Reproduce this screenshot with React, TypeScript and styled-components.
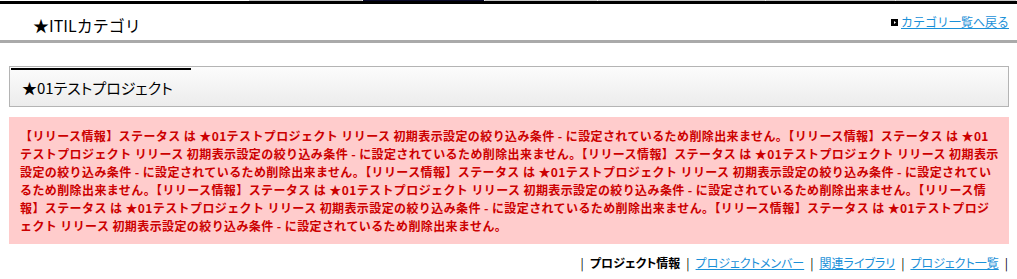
import React from "react";
import styled, { createGlobalStyle } from "styled-components";

const GlobalStyle = createGlobalStyle`
  body {
    margin: 0;
    background: #ffffff;
    font-family: "Noto Sans CJK JP", "Liberation Sans", sans-serif;
    color: #000000;
  }
`;

const colors = {
  red: "#cc0000",
  pink: "#ffcccc",
  link: "#1a90d8",
  rule: "#aaaaaa",
};

const TabEdges = styled.div`
  display: flex;
  height: 1px;
  padding-left: 249px;
`;

const TabEdge = styled.div<{ width: number; active?: boolean }>`
  width: ${(p) => p.width}px;
  height: 1px;
  background: ${(p) => (p.active ? "#0a0a2a" : "#c8c8c8")};
  border-right: 1px solid #f0f0f0;
  box-sizing: border-box;
`;

const TopBar = styled.div`
  height: 3px;
  background: #000000;
`;

const Header = styled.header`
  display: flex;
  align-items: center;
  justify-content: space-between;
  height: 36px;
  padding: 0 8px 0 33px;
  border-bottom: 3px solid ${colors.rule};
`;

const SiteTitle = styled.h1`
  margin: 6px 0 0;
  font-size: 16px;
  font-weight: normal;
  line-height: 20px;
`;

const BackLink = styled.a`
  display: flex;
  align-items: center;
  gap: 3px;
  font-size: 12px;
  line-height: 16px;
  color: ${colors.link};
  text-decoration: underline;
  cursor: pointer;
`;

const Content = styled.main`
  padding: 23px 8px 0 9px;
`;

const ProjectPanel = styled.section`
  position: relative;
  height: 37px;
  border: 1px solid #b4b4b4;
  background: linear-gradient(#fcfcfc, #ececec);
  display: flex;
  align-items: center;
  padding: 2px 0 0 12px;
  box-sizing: content-box;

  &::before {
    content: "";
    position: absolute;
    left: 1px;
    top: 1px;
    width: 180px;
    height: 2px;
    background: #000000;
  }
`;

const ProjectTitle = styled.h2`
  margin: 0;
  font-size: 15px;
  font-weight: normal;
  line-height: 20px;
  font-feature-settings: "palt";
`;

const ErrorBox = styled.div`
  margin-top: 10px;
  padding: 10px 10px 9px 11px;
  background: ${colors.pink};
  color: ${colors.red};
  font-size: 12px;
  font-weight: bold;
  line-height: 18px;
  letter-spacing: 0.4px;
`;

const SubNav = styled.nav`
  display: flex;
  justify-content: flex-end;
  align-items: center;
  gap: 6px;
  margin-top: 10px;
  padding-right: 1px;
  font-size: 12px;
  line-height: 18px;
  font-feature-settings: "palt";
`;

const NavSep = styled.span`
  color: #000000;
`;

const NavItem = styled.a<{ current?: boolean }>`
  color: ${(p) => (p.current ? "#000000" : colors.link)};
  font-weight: ${(p) => (p.current ? "bold" : "normal")};
  text-decoration: ${(p) => (p.current ? "none" : "underline")};
  cursor: pointer;
`;

const ArrowIcon = () => (
  <svg width="7" height="7" viewBox="0 0 7 7">
    <rect width="7" height="7" fill="#000" />
    <path d="M3 2 L5 3.5 L3 5 Z" fill="#fff" />
  </svg>
);

const message =
  "【リリース情報】ステータス は ★01テストプロジェクト リリース 初期表示設定の絞り込み条件 - に設定されているため削除出来ません。";

const navItems = [
  { label: "プロジェクト情報", current: true },
  { label: "プロジェクトメンバー" },
  { label: "関連ライブラリ" },
  { label: "プロジェクト一覧" },
];

const tabs = [
  { width: 114 },
  { width: 122, active: true },
  { width: 113 },
  { width: 168 },
  { width: 130 },
  { width: 121 },
];

export default function App() {
  return (
    <>
      <GlobalStyle />
      <TabEdges>
        {tabs.map((t, i) => (
          <TabEdge key={i} width={t.width} active={t.active} />
        ))}
      </TabEdges>
      <TopBar />
      <Header>
        <SiteTitle>★ITILカテゴリ</SiteTitle>
        <BackLink>
          <ArrowIcon />
          カテゴリ一覧へ戻る
        </BackLink>
      </Header>
      <Content>
        <ProjectPanel>
          <ProjectTitle>★01テストプロジェクト</ProjectTitle>
        </ProjectPanel>
        <ErrorBox>{Array(7).fill(message).join("")}</ErrorBox>
        <SubNav>
          {navItems.map((item) => (
            <React.Fragment key={item.label}>
              <NavSep>|</NavSep>
              <NavItem current={item.current}>{item.label}</NavItem>
            </React.Fragment>
          ))}
          <NavSep>|</NavSep>
        </SubNav>
      </Content>
    </>
  );
}
